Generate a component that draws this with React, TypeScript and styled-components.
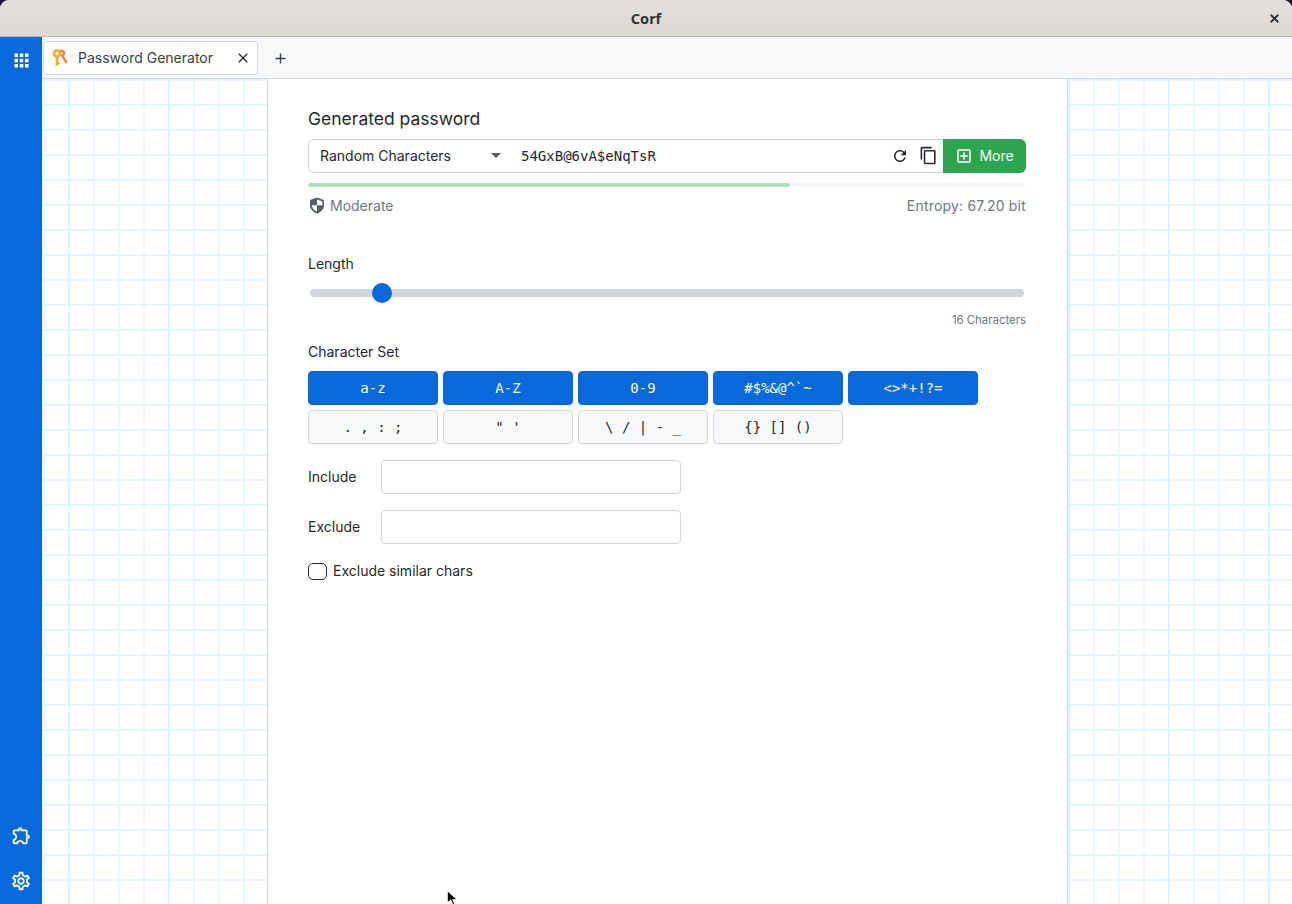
import React from "react";
import styled, { createGlobalStyle } from "styled-components";
import { X } from "lucide-react";
import {
  MdApps,
  MdOutlineExtension,
  MdOutlineSettings,
  MdClose,
  MdAdd,
  MdRefresh,
  MdOutlineContentCopy,
  MdOutlineAddBox,
} from "react-icons/md";

const GlobalStyle = createGlobalStyle`
  html, body {
    margin: 0;
    padding: 0;
    height: 100%;
    background: #1d1633;
    font-family: Inter, "Noto Sans", sans-serif;
    color: #24292f;
    overflow: hidden;
  }
  * { box-sizing: border-box; }
`;

const Window = styled.div`
  position: relative;
  width: 1292px;
  height: 904px;
  display: flex;
  flex-direction: column;
  background: #fff;
  border-radius: 9px 9px 0 0;
  overflow: hidden;
`;

const TitleBar = styled.header`
  height: 37px;
  flex: none;
  display: flex;
  align-items: center;
  justify-content: center;
  background: linear-gradient(#e3dfdb, #dcd8d3);
  border-bottom: 1px solid #bfb8b1;
  font: 700 14.5px "Noto Sans", "Open Sans", sans-serif;
  color: #2e3436;
  position: relative;
`;

const WindowClose = styled.span`
  position: absolute;
  right: 11px;
  top: 12px;
  display: flex;
  color: #2e3436;
`;

const Body = styled.div`
  flex: 1;
  display: flex;
  min-height: 0;
`;

const Sidebar = styled.nav`
  width: 42px;
  flex: none;
  display: flex;
  flex-direction: column;
  align-items: center;
  background: #0969da;
  color: #fff;
  padding: 13px 0 12px;
`;

const SideSpacer = styled.div`
  flex: 1;
`;

const SideIcon = styled.span<{ $gap?: number }>`
  display: flex;
  margin-top: ${(p) => p.$gap ?? 0}px;
`;

const Main = styled.div`
  flex: 1;
  display: flex;
  flex-direction: column;
  min-width: 0;
`;

const TabBar = styled.div`
  height: 42px;
  flex: none;
  display: flex;
  align-items: center;
  background: #f6f8fa;
  border-bottom: 1px solid #d0d7de;
  padding: 1px 0 0 1px;
`;

const Tab = styled.div`
  width: 215px;
  height: 34px;
  display: flex;
  align-items: center;
  background: #fff;
  border: 1px solid #d0d7de;
  border-radius: 4px;
  padding: 0 6px 2px 8px;
  font-size: 14px;
  color: #3a4149;
`;

const TabTitle = styled.span`
  flex: 1;
  margin-left: 10px;
`;

const TabClose = styled.span`
  display: flex;
  margin-top: 2px;
  color: #24292f;
`;

const AddTab = styled.span`
  display: flex;
  margin-left: 14px;
  color: #3a4149;
`;

const Canvas = styled.div`
  flex: 1;
  display: flex;
  min-height: 0;
  background-color: #fff;
  background-image:
    linear-gradient(to right, #ddf4ff 0 2px, transparent 2px),
    linear-gradient(to right, #ebf8ff 0 2px, transparent 2px),
    linear-gradient(to bottom, #e3f5ff 0 2px, transparent 2px);
  background-size: 100px 100%, 25px 100%, 100% 25px;
  background-position: 26px 0, 1px 0, 0 0;
`;

const Panel = styled.main`
  width: 801px;
  margin-left: 225px;
  background: #fff;
  border-left: 1px solid #d0d7de;
  border-right: 1px solid #b6e3ff;
  padding: 28px 41px 0 40px;
`;

const Heading = styled.h2`
  margin: 0;
  font-size: 17.5px;
  line-height: 24px;
  font-weight: 400;
  color: #24292f;
`;

const PasswordRow = styled.div`
  margin-top: 8px;
  height: 34px;
  display: flex;
  align-items: center;
`;

const PasswordBox = styled.div`
  flex: 1;
  height: 34px;
  display: flex;
  align-items: center;
  border: 1px solid #d0d7de;
  border-right: 0;
  border-radius: 6px 0 0 6px;
  padding: 0 0 1px 11px;
`;

const SelectLabel = styled.span`
  width: 171px;
  font-size: 14px;
  color: #24292f;
`;

const Caret = styled.span`
  width: 0;
  height: 0;
  border-left: 5px solid transparent;
  border-right: 5px solid transparent;
  border-top: 5px solid #57606a;
`;

const PasswordValue = styled.span`
  flex: 1;
  margin-left: 20px;
  font: 14px "DejaVu Sans Mono", "Liberation Mono", monospace;
  color: #24292f;
`;

const IconButton = styled.span<{ $gap: number }>`
  display: flex;
  margin-right: ${(p) => p.$gap}px;
  color: #24292f;
`;

const MoreButton = styled.button`
  width: 83px;
  height: 34px;
  display: flex;
  align-items: center;
  justify-content: center;
  gap: 6px;
  border: 0;
  border-radius: 0 6px 6px 0;
  background: #2da44e;
  color: #fff;
  font: 14px Inter, sans-serif;
  padding: 0 0 1px;
`;

const MeterTrack = styled.div`
  margin-top: 10px;
  height: 4px;
  border-radius: 2px;
  background: #f6f8fa;
  overflow: hidden;
`;

const MeterFill = styled.div`
  height: 100%;
  background: #aee0bb;
  border-radius: 2px;
`;

const StrengthRow = styled.div`
  margin-top: 7px;
  height: 22px;
  display: flex;
  align-items: center;
  justify-content: space-between;
  font-size: 14px;
  color: #6e7781;
`;

const Strength = styled.span`
  display: flex;
  align-items: center;
  gap: 5px;
  margin-left: 1px;
`;

const Entropy = styled.span`
  letter-spacing: 0.2px;
`;

const FieldLabel = styled.div<{ $top: number }>`
  margin-top: ${(p) => p.$top}px;
  font-size: 14px;
  line-height: 20px;
  color: #24292f;
`;

const SliderTrack = styled.div`
  position: relative;
  margin: 15px 2px 0;
  height: 8px;
  border-radius: 4px;
  background: #d0d7de;
`;

const SliderThumb = styled.span`
  position: absolute;
  top: -6px;
  width: 20px;
  height: 20px;
  margin-left: -10px;
  border-radius: 50%;
  background: #0969da;
`;

const SliderCaption = styled.div`
  margin-top: 15px;
  font-size: 11.4px;
  line-height: 16px;
  text-align: right;
  color: #6e7781;
`;

const CharGrid = styled.div`
  margin-top: 9px;
  display: grid;
  grid-template-columns: repeat(5, 130px);
  column-gap: 5px;
  row-gap: 5px;
`;

const CharButton = styled.button<{ $on?: boolean }>`
  height: 34px;
  padding: 0;
  border-radius: 4px;
  border: 1px solid ${(p) => (p.$on ? "#0969da" : "#d0d7de")};
  background: ${(p) => (p.$on ? "#0969da" : "#f6f8fa")};
  color: ${(p) => (p.$on ? "#fff" : "#24292f")};
  font: 14px "DejaVu Sans Mono", "Liberation Mono", monospace;
  white-space: pre;
`;

const InputRow = styled.label<{ $top: number }>`
  margin-top: ${(p) => p.$top}px;
  display: flex;
  align-items: center;
  font-size: 14px;
  color: #24292f;
`;

const InputName = styled.span`
  width: 73px;
  padding-bottom: 2px;
`;

const TextBox = styled.input`
  width: 300px;
  height: 34px;
  border: 1px solid #d0d7de;
  border-radius: 4px;
  background: #fff;
  outline: none;
`;

const CheckRow = styled.div`
  margin-top: 17px;
  display: flex;
  align-items: center;
  gap: 6px;
  font-size: 14px;
  line-height: 20px;
  color: #24292f;
`;

const CheckBox = styled.span`
  width: 19px;
  height: 17px;
  border: 1px solid #24292f;
  border-radius: 5px;
  background: #fff;
`;

const Cursor = styled.svg`
  position: absolute;
  left: 446px;
  top: 889px;
`;

const KeyLogo = () => (
  <svg width="16" height="17" viewBox="0 0 16 17" fill="none">
    <path d="M7.5 2.2c4.4-1.6 6.4 2.8 2.8 4.6L14.6 14" stroke="#f57c3b" strokeWidth="2.4" />
    <circle cx="5" cy="4.5" r="3" stroke="#f9a825" strokeWidth="2.6" />
    <path d="M5 7v8l2.4-1.2" stroke="#f9a825" strokeWidth="2.6" />
  </svg>
);

const ShieldHalf = () => (
  <svg width="16" height="17" viewBox="0 0 16 17">
    <path d="M8 .6 15 3v5.2c0 4-3 6.9-7 8.2-4-1.3-7-4.2-7-8.2V3z" fill="#57606a" />
    <path d="M8 2.6 13.4 4.4v3.9H8zM8 8.3H2.7c.3 2.9 2.4 5 5.3 6.2z" fill="#fff" />
  </svg>
);

const sets: { label: string; on?: boolean }[] = [
  { label: "a-z", on: true },
  { label: "A-Z", on: true },
  { label: "0-9", on: true },
  { label: "#$%&@^`~", on: true },
  { label: "<>*+!?=", on: true },
  { label: ". , : ;" },
  { label: "\" '" },
  { label: "\\ / | - _" },
  { label: "{} [] ()" },
];

export default function App() {
  return (
    <>
      <GlobalStyle />
      <Window>
        <TitleBar>
          Corf
          <WindowClose>
            <X size={13} strokeWidth={3.4} />
          </WindowClose>
        </TitleBar>
        <Body>
          <Sidebar>
            <SideIcon>
              <MdApps size={21} />
            </SideIcon>
            <SideSpacer />
            <SideIcon>
              <MdOutlineExtension size={21} />
            </SideIcon>
            <SideIcon $gap={24}>
              <MdOutlineSettings size={22} />
            </SideIcon>
          </Sidebar>
          <Main>
            <TabBar>
              <Tab>
                <KeyLogo />
                <TabTitle>Password Generator</TabTitle>
                <TabClose>
                  <MdClose size={16} />
                </TabClose>
              </Tab>
              <AddTab>
                <MdAdd size={17} />
              </AddTab>
            </TabBar>
            <Canvas>
              <Panel>
                <Heading>Generated password</Heading>
                <PasswordRow>
                  <PasswordBox>
                    <SelectLabel>Random Characters</SelectLabel>
                    <Caret />
                    <PasswordValue>54GxB@6vA$eNqTsR</PasswordValue>
                    <IconButton $gap={10}>
                      <MdRefresh size={18} />
                    </IconButton>
                    <IconButton $gap={5}>
                      <MdOutlineContentCopy size={19} />
                    </IconButton>
                  </PasswordBox>
                  <MoreButton>
                    <MdOutlineAddBox size={18} />
                    More
                  </MoreButton>
                </PasswordRow>
                <MeterTrack>
                  <MeterFill style={{ width: "67.2%" }} />
                </MeterTrack>
                <StrengthRow>
                  <Strength>
                    <ShieldHalf />
                    Moderate
                  </Strength>
                  <Entropy>Entropy: 67.20 bit</Entropy>
                </StrengthRow>
                <FieldLabel $top={38}>Length</FieldLabel>
                <SliderTrack>
                  <SliderThumb style={{ left: "10.1%" }} />
                </SliderTrack>
                <SliderCaption>16 Characters</SliderCaption>
                <FieldLabel $top={14}>Character Set</FieldLabel>
                <CharGrid>
                  {sets.map((s, i) => (
                    <CharButton key={i} $on={s.on}>
                      {s.label}
                    </CharButton>
                  ))}
                </CharGrid>
                <InputRow $top={16}>
                  <InputName>Include</InputName>
                  <TextBox />
                </InputRow>
                <InputRow $top={16}>
                  <InputName>Exclude</InputName>
                  <TextBox />
                </InputRow>
                <CheckRow>
                  <CheckBox />
                  Exclude similar chars
                </CheckRow>
              </Panel>
            </Canvas>
          </Main>
        </Body>
        <Cursor width="14" height="18" viewBox="0 0 12 15">
          <path d="M1 1v11l3-2.6 1.8 4 1.8-.8L6 9h4z" fill="#000" stroke="#fff" strokeWidth="1" />
        </Cursor>
      </Window>
    </>
  );
}
